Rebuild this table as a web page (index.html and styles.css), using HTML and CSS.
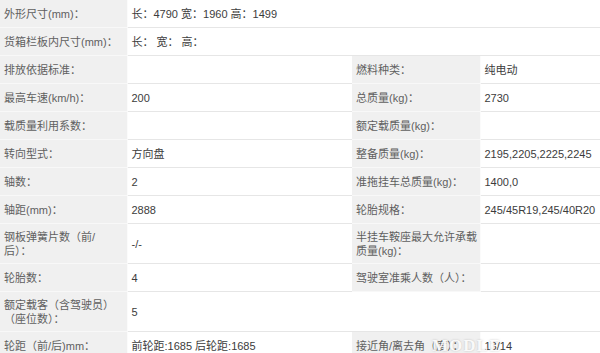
FILE: index.html
```html
<!DOCTYPE html>
<html lang="zh-CN">
<head>
<meta charset="utf-8">
<title>车辆参数</title>
<link rel="stylesheet" href="styles.css">
</head>
<body>
<div class="page">
<table class="spec">
  <colgroup>
    <col class="c-l1"><col class="c-v1"><col class="c-l2"><col class="c-v2">
  </colgroup>
  <tbody>
    <tr><td class="lbl">外形尺寸(mm)：</td><td class="val" colspan="3">长：4790 宽：1960 高：1499</td></tr>
    <tr><td class="lbl">货箱栏板内尺寸(mm)：</td><td class="val" colspan="3">长：&nbsp;宽：&nbsp;高：</td></tr>
    <tr><td class="lbl">排放依据标准：</td><td class="val"></td><td class="lbl">燃料种类：</td><td class="val">纯电动</td></tr>
    <tr><td class="lbl">最高车速(km/h)：</td><td class="val">200</td><td class="lbl">总质量(kg)：</td><td class="val">2730</td></tr>
    <tr><td class="lbl">载质量利用系数：</td><td class="val"></td><td class="lbl">额定载质量(kg)：</td><td class="val"></td></tr>
    <tr><td class="lbl">转向型式：</td><td class="val">方向盘</td><td class="lbl">整备质量(kg)：</td><td class="val">2195,2205,2225,2245</td></tr>
    <tr><td class="lbl">轴数：</td><td class="val">2</td><td class="lbl">准拖挂车总质量(kg)：</td><td class="val">1400,0</td></tr>
    <tr><td class="lbl">轴距(mm)：</td><td class="val">2888</td><td class="lbl">轮胎规格：</td><td class="val">245/45R19,245/40R20</td></tr>
    <tr><td class="lbl">钢板弹簧片数（前/<br>后）：</td><td class="val">-/-</td><td class="lbl">半挂车鞍座最大允许承载<br>质量(kg)：</td><td class="val"></td></tr>
    <tr><td class="lbl">轮胎数：</td><td class="val">4</td><td class="lbl">驾驶室准乘人数（人）：</td><td class="val"></td></tr>
    <tr><td class="lbl">额定载客（含驾驶员）<br>（座位数）：</td><td class="val" colspan="3">5</td></tr>
    <tr><td class="lbl">轮距（前/后)mm：</td><td class="val">前轮距:1685 后轮距:1685</td><td class="lbl">接近角/离去角（度）：</td><td class="val">13/14</td></tr>
  </tbody>
</table>
<span class="watermark">MODLE</span>
</div>
</body>
</html>
```

FILE: styles.css
```css
html, body {
  margin: 0;
  padding: 0;
  background: #fff;
}
.page {
  position: relative;
  width: 600px;
  overflow: hidden;
}
.spec {
  width: 600px;
  table-layout: fixed;
  border-collapse: collapse;
  font-family: "Liberation Sans", "Noto Sans CJK SC", sans-serif;
  font-size: 11px;
  line-height: 14px;
}
.c-l1 { width: 127px; }
.c-v1 { width: 225px; }
.c-l2 { width: 128px; }
.c-v2 { width: 120px; }
.spec td {
  height: 16px;
  padding: 6px 2px 5px 4px;
  vertical-align: middle;
  border-bottom: 1px solid #e6e6e6;
  white-space: nowrap;
  overflow: hidden;
}
.spec td.lbl {
  background: #f0f0f0;
  color: #5f5f5f;
  border-bottom-color: #f8f8f8;
  border-right: 1px solid #fbfbfb;
}
.spec td.val {
  color: #3c3c3c;
}
.watermark {
  position: absolute;
  left: 432px;
  top: 336px;
  font-family: "Liberation Serif", serif;
  font-weight: bold;
  font-size: 17px;
  letter-spacing: 1px;
  color: rgba(255, 255, 255, 0.92);
  text-shadow: 0 0 2px rgba(150, 150, 150, 0.6);
}
```
